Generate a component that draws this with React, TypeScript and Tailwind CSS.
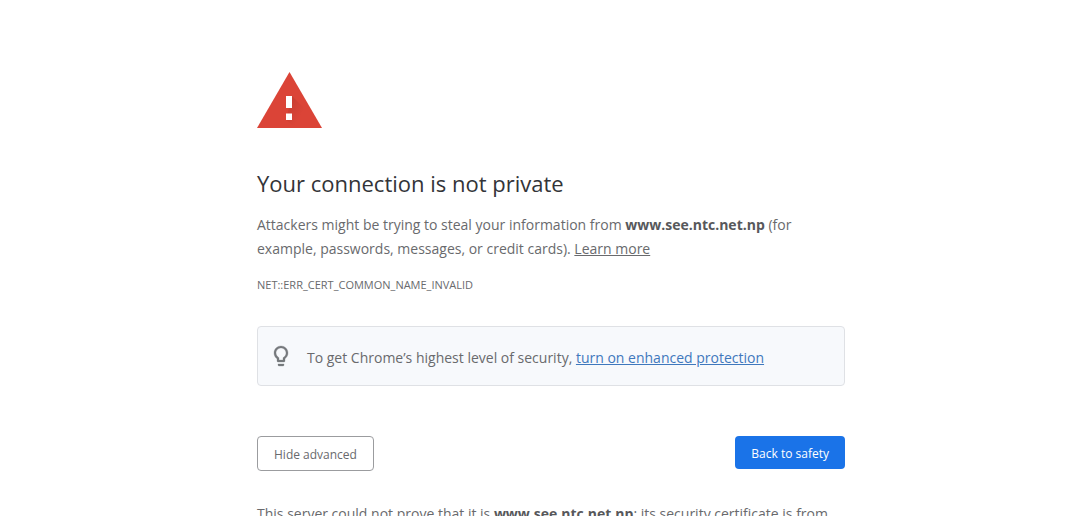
interface HostProps {
  name: string;
}

const HOST = "www.see.ntc.net.np";

const Host = ({ name }: HostProps) => (
  <strong className="font-bold text-[#57585b]">{name}</strong>
);

const WarningIcon = () => (
  <svg className="h-14 w-[65px]" viewBox="0 0 65 56" aria-hidden="true">
    <defs>
      <linearGradient id="mark-shadow" x1="0" y1="0" x2="1" y2="0.6">
        <stop offset="0" stopColor="#b5382d" stopOpacity=".7" />
        <stop offset=".6" stopColor="#b5382d" stopOpacity="0" />
      </linearGradient>
    </defs>
    <path d="M32.5 0 65 56H0z" fill="#db4437" />
    <path d="M35 24 53 42 61 56H38L29 47.500z" fill="url(#mark-shadow)" />
    <path d="M29 24h6v12h-6zM29 41.500h6V48h-6z" fill="#fff" />
  </svg>
);

const BulbIcon = () => (
  <svg className="size-6 shrink-0" viewBox="0 0 24 24" aria-hidden="true">
    <path
      fill="#76797d"
      stroke="#76797d"
      strokeWidth=".3"
      d="M9 21c0 .5.400 1 1 1h4c.6 0 1-.5 1-1v-1H9v1zm3-19C8.100 2 5 5.100 5 9c0 2.400 1.200 4.500 3 5.700V17c0 .5.400 1 1 1h6c.6 0 1-.5 1-1v-2.300c1.800-1.300 3-3.400 3-5.700 0-3.900-3.100-7-7-7zm2.900 11.100-.9.600V16h-4v-2.300l-.9-.6A5 5 0 0 1 7 9c0-2.800 2.200-5 5-5s5 2.200 5 5c0 1.600-.8 3.200-2.100 4.100z"
    />
  </svg>
);

const App = () => {
  return (
    <div className="h-screen overflow-hidden bg-white pl-6 font-['Open_Sans','Noto_Sans',sans-serif] text-sm leading-6 text-[#696a6d]">
      <main className="mx-auto max-w-[588px] pt-[72px]">
        <WarningIcon />
        <h1 className="mt-[39px] text-[22px] leading-8 text-[#333438]">
          Your connection is not private
        </h1>
        <p className="mt-[14px]">
          Attackers might be trying to steal your information from{" "}
          <Host name={HOST} /> (for example, passwords, messages, or credit
          cards).{" "}
          <a href="#learn-more" className="underline">
            Learn more
          </a>
        </p>
        <p className="mt-3 text-[11px] leading-6">
          NET::ERR_CERT_COMMON_NAME_INVALID
        </p>

        <div className="mt-[29px] flex h-[60px] items-center gap-[14px] rounded border border-[#dfe1e5] bg-[#f7f9fc] px-[11px]">
          <BulbIcon />
          <p className="pt-1">
            To get Chrome’s highest level of security,{" "}
            <a href="#enhanced-protection" className="text-[#3f78bd] underline">
              turn on enhanced protection
            </a>
          </p>
        </div>

        <div className="mt-[50px] flex items-start justify-between">
          <button
            type="button"
            className="h-[35px] rounded border border-[#9b9c9f] px-4 pt-0.5 text-xs"
          >
            Hide advanced
          </button>
          <button
            type="button"
            className="h-[33px] rounded bg-[#1a73e8] px-4 pt-0.5 text-xs text-white"
          >
            Back to safety
          </button>
        </div>

        <p className="mt-[31px]">
          This server could not prove that it is <Host name={HOST} />; its
          security certificate is from
        </p>
      </main>
    </div>
  );
};

export default App;
